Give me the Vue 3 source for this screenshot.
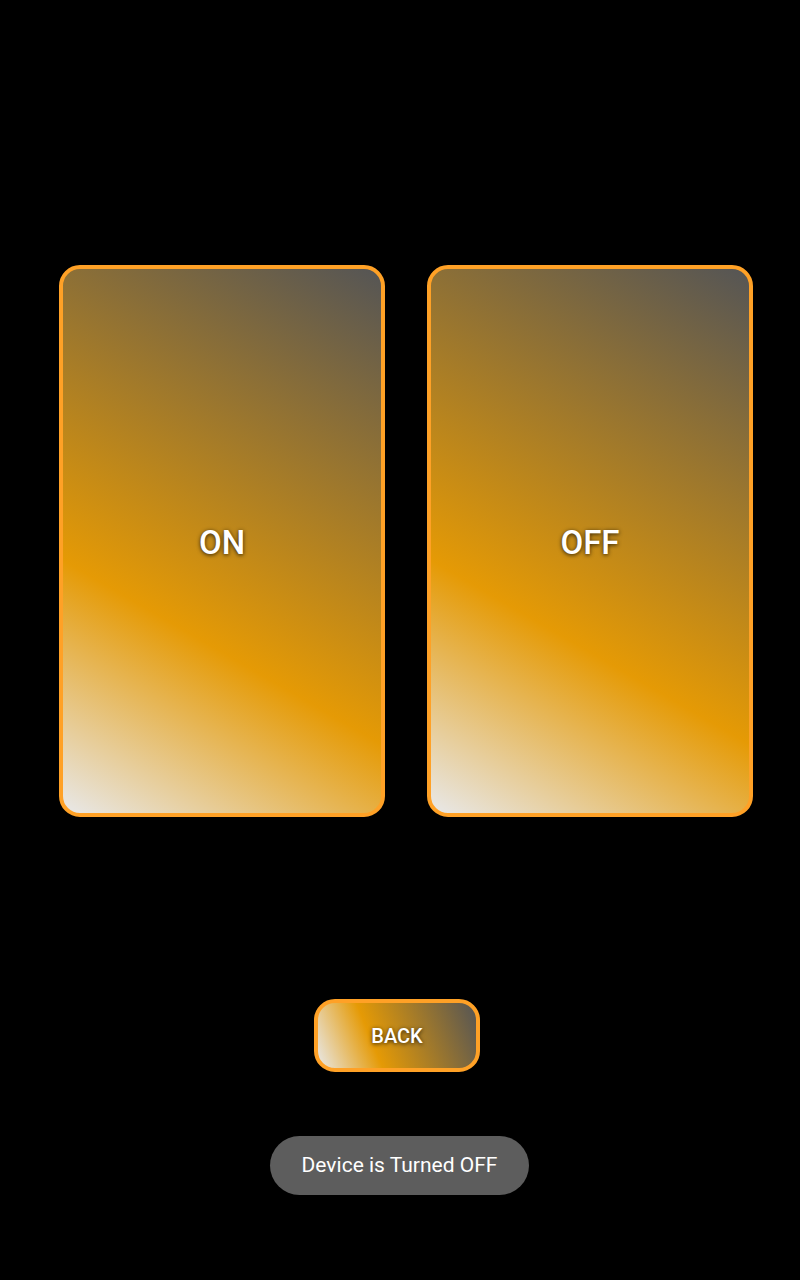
<script setup>
import { ref } from 'vue'

const status = ref('Device is Turned OFF')
const setDevice = (state) => {
  status.value = `Device is Turned ${state}`
}
</script>

<template>
  <main class="screen">
    <div class="switches">
      <button class="btn switch" type="button" @click="setDevice('ON')">ON</button>
      <button class="btn switch" type="button" @click="setDevice('OFF')">OFF</button>
    </div>
    <button class="btn back" type="button">BACK</button>
    <p class="toast" role="status">{{ status }}</p>
  </main>
</template>

<style>
html,
body {
  margin: 0;
  background: #000;
}
</style>

<style scoped>
.screen {
  box-sizing: border-box;
  min-height: 100vh;
  padding: 265px 47px 85px 59px;
  display: flex;
  flex-direction: column;
  align-items: center;
  background: #000;
  color: #fff;
  font-family: Roboto, "Liberation Sans", sans-serif;
}

.switches {
  align-self: stretch;
  display: grid;
  grid-template-columns: 1fr 1fr;
  gap: 42px;
}

.btn {
  box-sizing: border-box;
  margin: 0;
  padding: 0;
  border: 4px solid #ffa126;
  border-radius: 21px;
  color: #fff;
  font-family: inherit;
  font-weight: 500;
  text-shadow: 0 1px 4px rgba(0, 0, 0, 0.8);
  cursor: pointer;
}

.switch {
  min-height: 552px;
  padding-top: 2px;
  background: linear-gradient(30deg, #e8e8e8 1%, #e59a05 35%, #555 99%) border-box;
  font-size: 33px;
}

.back {
  min-width: 166px;
  min-height: 73px;
  margin: 182px 18px 0 0;
  background: linear-gradient(68deg, #e8e8e8 3%, #e59a05 36%, #555 97%) border-box;
  font-size: 20px;
}

.toast {
  margin: 64px 13px 0 0;
  padding: 16px 32px;
  border-radius: 30px;
  background: #5d5d5d;
  font-size: 21px;
  line-height: 27px;
  white-space: nowrap;
}
</style>
